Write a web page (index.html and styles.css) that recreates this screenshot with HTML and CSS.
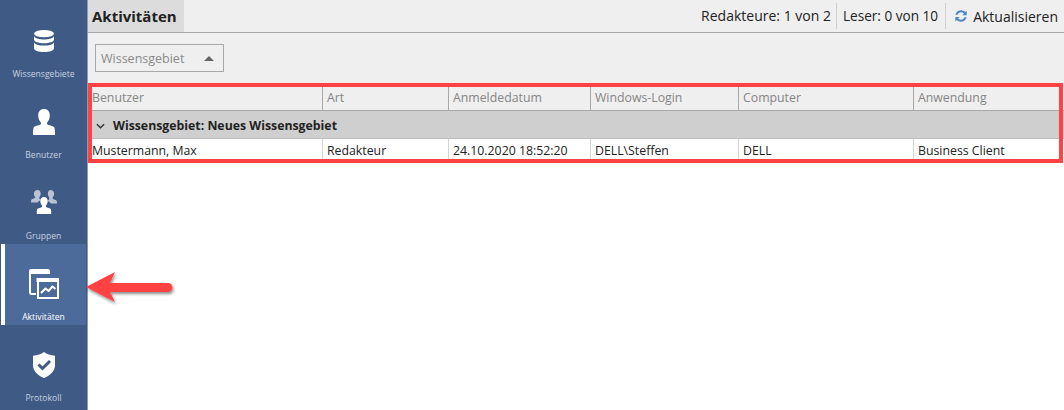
FILE: index.html
```html
<!DOCTYPE HTML>
<html>
  <head>
    <title>Aktivitäten</title>
    <meta charset="utf-8" />
    <link rel="stylesheet" href="styles.css">
  </head>
  <body>
    <nav class='sidebar'>
      <a class='nav-item'>
        <svg class='nav-icon icon-db' viewBox="0 0 20 22"><g fill="#fff">
          <ellipse cx="10" cy="3.600" rx="10" ry="3.600"/>
          <path d="M0 6.200c1.500 2.200 5.500 3.200 10 3.200s8.500-1 10-3.200v3.300c0 2.200-4.500 3.700-10 3.700S0 11.700 0 9.500z"/>
          <path d="M0 12.400c1.500 2.200 5.500 3.200 10 3.200s8.500-1 10-3.200v5.800c0 2.200-4.500 3.800-10 3.800S0 20.400 0 18.200z"/>
        </g></svg>
        <span>Wissensgebiete</span>
      </a>
      <a class='nav-item'>
        <svg class='nav-icon icon-user' viewBox="0 0 22 26"><path fill="#fff" d="M11 0c3.700 0 5.800 2.700 5.800 6.400 0 2.900-1 5.300-2.700 7v1.800c1.300 1 5.800 1.500 7.100 3.100.7.900.8 4.500.8 7.700H0c0-3.200.1-6.800.8-7.700 1.300-1.600 5.800-2.100 7.100-3.100v-1.800c-1.700-1.700-2.700-4.100-2.700-7C5.200 2.700 7.300 0 11 0z"/></svg>
        <span>Benutzer</span>
      </a>
      <a class='nav-item'>
        <svg class='nav-icon icon-group' viewBox="0 0 26 24">
          <g fill="#b9c3d3">
            <path d="M6.500 0c2.100 0 3.200 1.600 3.200 3.600 0 1.600-.6 2.800-1.400 3.700v1.400c.4.400 1.300.7 2.100 1-1.600.7-3 1.500-3.700 2.700H0c0-1.300 0-2.200.4-2.700.6-.8 3.100-1.200 3.900-1.900V7.300c-.9-.9-1.400-2.100-1.400-3.700C2.900 1.600 4.400 0 6.500 0z"/>
            <path d="M19.500 0c2.100 0 3.600 1.600 3.600 3.600 0 1.600-.5 2.800-1.400 3.700v1.500c.8.700 3.300 1.100 3.900 1.900.4.500.4 1.400.4 2.700h-6.200c-.7-1.200-2.100-2-3.700-2.700.8-.3 1.700-.6 2.100-1V7.300c-.8-.9-1.400-2.100-1.400-3.700 0-2 1.100-3.600 2.700-3.600z"/>
          </g>
          <path fill="#fff" d="M13 7c2.400 0 3.700 1.800 3.700 4.100 0 1.800-.7 3.300-1.700 4.300V17c1 .7 4.100 1.100 4.800 2.100.4.600.4 3.300.4 4.900H5.800c0-1.600 0-4.300.4-4.900.7-1 3.800-1.400 4.800-2.100v-1.600c-1-1-1.700-2.500-1.700-4.300C9.300 8.800 10.600 7 13 7z"/>
        </svg>
        <span>Gruppen</span>
      </a>
      <a class='nav-item active'>
        <svg class='nav-icon icon-act' viewBox="0 0 30 30">
          <path fill="none" stroke="#fff" stroke-width="2" d="M8 25H2.500A1.500 1.500 0 0 1 1 23.500V3.500h19"/>
          <path fill="#fff" d="M0 2A2 2 0 0 1 2 0h17c1 0 2 .7 2 2v3H0z"/>
          <path fill="#4d6b9a" d="M7 7h23v23H7z"/>
          <path fill="none" stroke="#fff" stroke-width="2" d="M9 12h20v17H9z"/>
          <path fill="#fff" d="M7.500 9h22.500v4H7.500z"/>
          <path fill="none" stroke="#fff" stroke-width="2" stroke-linejoin="round" d="M12 24l4.500-4.500 3 2.500 4-4.500 3 2.500"/>
        </svg>
        <span>Aktivitäten</span>
      </a>
      <a class='nav-item'>
        <svg class='nav-icon icon-shield' viewBox="0 0 22 26">
          <path fill="#fff" d="M11 0c2.800 2.100 6.500 3.300 11 3.700v9.300c0 6-4.600 10.400-11 13C4.600 23.400 0 19 0 13V3.700C4.500 3.300 8.200 2.100 11 0z"/>
          <path fill="none" stroke="#3e5a85" stroke-width="3" d="M5.500 12.500l4 4 7.500-7.500"/>
        </svg>
        <span>Protokoll</span>
      </a>
    </nav>
    <main class='content'>
      <header class='titlebar'>
        <h1 class='tab'>Aktivitäten</h1>
        <div class='spacer'></div>
        <div class='stat stat-first'>Redakteure: 1 von 2</div>
        <div class='stat stat-last'>Leser: 0 von 10</div>
        <div class='refresh'>
          <svg viewBox="0 0 16 16" class='refresh-icon'>
            <path fill="#4a86c8" d="M8.200 1.500c1.900 0 3.500.8 4.600 2L14.500 2v5H9.600l1.800-1.900c-.8-.8-1.900-1.300-3.200-1.300-2 0-3.600 1.100-4.200 2.900H1.500C2.200 3.600 4.900 1.500 8.200 1.500zM1.500 9h4.900l-1.800 1.900c.8.800 1.900 1.300 3.200 1.300 2 0 3.600-1.100 4.200-2.900h2.500c-.7 3.100-3.400 5.200-6.700 5.200-1.900 0-3.500-.8-4.600-2L1.500 14z"/>
          </svg>
          Aktualisieren
        </div>
      </header>
      <div class='toolbar'>
        <div class='group-box'>Wissensgebiet <span class='caret'></span></div>
      </div>
      <div class='grid'>
        <div class='row head'>
          <div>Benutzer</div><div>Art</div><div>Anmeldedatum</div><div>Windows-Login</div><div>Computer</div><div>Anwendung</div>
        </div>
        <div class='group-row'>
          <svg class='chevron' viewBox="0 0 10 6"><path fill="none" stroke="#333" stroke-width="1.500" d="M1 1l4 4 4-4"/></svg>
          Wissensgebiet: Neues Wissensgebiet
        </div>
        <div class='row data'>
          <div>Mustermann, Max</div><div>Redakteur</div><div>24.10.2020 18:52:20</div><div>DELL\Steffen</div><div>DELL</div><div>Business Client</div>
        </div>
      </div>
    </main>
    <div class='callout-box'></div>
    <svg class='callout-arrow' viewBox="0 0 92 40">
      <defs>
        <filter id="shadow" x="-10%" y="-20%" width="125%" height="160%">
          <feDropShadow dx="1" dy="2" stdDeviation="1.500" flood-color="#000" flood-opacity="0.45"/>
        </filter>
      </defs>
      <path filter="url(#shadow)" fill="#ff4343" d="M1 17L30 2l-5 11h58a4.500 4.500 0 0 1 0 9H25l5 10z"/>
    </svg>
  </body>
</html>
```

FILE: styles.css
```css
html, body {
  height: 100%;
}
body {
  margin: 0;
  display: flex;
  position: relative;
  overflow: hidden;
  background: #fff;
  color: #222;
  font-family: "Open Sans", "Noto Sans", sans-serif;
  font-size: 12.3px;
}
.sidebar {
  width: 87px;
  flex: none;
  padding-top: 1px;
  background: #3e5a85;
  border-right: 1px solid #8a9ab2;
}
.nav-item {
  height: 81px;
  margin: 0 1px;
  padding-right: 4px;
  display: flex;
  flex-direction: column;
  align-items: center;
  color: #c9d2e0;
  font-size: 8.600px;
  line-height: 12px;
  border-left: 4px solid transparent;
}
.nav-item.active {
  background: #4d6b9a;
  border-left-color: #fff;
  color: #fff;
}
.icon-db { width: 20px; height: 22px; margin: 29px 0 16px; }
.icon-user { width: 22px; height: 26px; margin: 27px 0 14px; }
.icon-group { width: 26px; height: 24px; margin: 27px 0 16px; }
.icon-act { width: 30px; height: 30px; margin: 25px 0 12px; }
.icon-shield { width: 22px; height: 26px; margin: 27px 0 14px; }

.content {
  flex: 1;
  min-width: 0;
}
.titlebar {
  height: 33px;
  box-sizing: border-box;
  display: flex;
  align-items: center;
  background: #efefef;
  border-bottom: 1px solid #a8a8a8;
  font-size: 14px;
}
.tab {
  margin: 0;
  height: 32px;
  line-height: 32px;
  padding: 0 7px 0 4px;
  background: #dcdcdc;
  font-size: 15px;
  font-weight: 700;
}
.spacer {
  flex: 1;
}
.stat {
  height: 26px;
  line-height: 26px;
  padding: 0 6px;
  border-right: 1px solid #cfcfcf;
}
.stat-first {
  padding-right: 5px;
}
.stat-last {
  padding-right: 7px;
  font-size: 13.600px;
}
.refresh {
  display: flex;
  align-items: center;
  padding: 0 6px 0 8px;
}
.refresh-icon {
  width: 14px;
  height: 14px;
  margin-right: 5px;
}
.toolbar {
  height: 50px;
  box-sizing: border-box;
  padding-top: 11px;
  background: #efefef;
}
.group-box {
  margin-left: 7px;
  width: 129px;
  height: 28px;
  box-sizing: border-box;
  padding-left: 5px;
  display: flex;
  align-items: center;
  border: 1px solid #a8a8a8;
  color: #8a8a8a;
  font-size: 12.500px;
}
.caret {
  margin-left: 20px;
  border-left: 5px solid transparent;
  border-right: 5px solid transparent;
  border-bottom: 5px solid #666;
}
.grid {
  background: #fff;
}
.row {
  display: grid;
  grid-template-columns: 234px 126px 142px 148px 175px 1fr;
}
.row > div {
  padding-left: 4px;
  border-left: 1px solid #a8a8a8;
  white-space: nowrap;
}
.row > div:first-child {
  border-left: 0;
}
.head {
  height: 28px;
  box-sizing: border-box;
  padding-top: 3px;
  background: #efefef;
  border-bottom: 1px solid #a8a8a8;
  color: #858585;
}
.head > div {
  line-height: 23px;
}
.group-row {
  height: 28px;
  box-sizing: border-box;
  padding-top: 2px;
  display: flex;
  align-items: center;
  background: #cfcfcf;
  border-bottom: 1px solid #bdbdbd;
  font-weight: 700;
}
.chevron {
  width: 9px;
  height: 6px;
  margin: 0 8px 0 8px;
}
.data > div {
  height: 24px;
  line-height: 23px;
  border-left-color: #d4d4d4;
}
.callout-box {
  position: absolute;
  left: 88px;
  top: 83px;
  width: 967px;
  height: 72px;
  border: 4px solid #ff4343;
  pointer-events: none;
}
.callout-arrow {
  position: absolute;
  left: 85px;
  top: 270px;
  width: 92px;
  height: 40px;
}
```
